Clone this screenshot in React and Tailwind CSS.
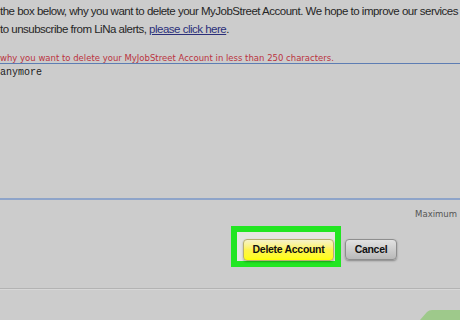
import React from 'react';

const App = () => {
    return (
        <div className="relative w-[460px] h-[320px] overflow-hidden bg-[#cccccc]" style={{ fontFamily: '"Liberation Sans", Arial, sans-serif' }}>
            {/* intro text */}
            <div className="pt-[2px] text-[11.5px] leading-[18px] tracking-[-0.5px] text-[#262626] whitespace-nowrap">
                <p>the box below, why you want to delete your MyJobStreet Account. We hope to improve our services based on your feedback.</p>
                <p>
                    to unsubscribe from LiNa alerts,{' '}
                    <a className="text-[#2b2f7a] underline">please click here</a>.
                </p>
            </div>

            {/* reason label */}
            <p className="mt-[15px] text-[8.5px] leading-[10px] text-[#bb3340] whitespace-nowrap" style={{ fontFamily: '"DejaVu Sans", Verdana, sans-serif' }}>
                why you want to delete your MyJobStreet Account in less than 250 characters.
            </p>

            {/* textarea */}
            <div className="h-[137px] border-t border-[#5d7db3] border-b-2 border-b-[#8ea4c9]">
                <p className="pt-[3px] text-[10px] leading-[12px] text-[#222]" style={{ fontFamily: '"Liberation Mono", "Courier New", monospace' }}>anymore</p>
            </div>

            <div className="flex justify-end pr-[3px] pt-[8px] text-[8.5px] leading-[12px] text-[#555]" style={{ fontFamily: '"DejaVu Sans", Verdana, sans-serif' }}>
                Maximum
            </div>

            {/* buttons */}
            <div className="flex items-start gap-[4px] pl-[231px] mt-[6px]">
                <div className="bg-[#22e622] p-[6px]">
                    <div className="bg-[#e6e6e2] pl-[6px] pt-[7px] pr-[1px]">
                        <button className="block w-[91px] h-[22px] rounded-[4px] border border-[#b8b070] bg-gradient-to-b from-[#f6f2c8] via-[#fff34a] to-[#ffff00] text-[10.5px] tracking-[-0.3px] font-bold text-[#111] shadow-[0_1px_2px_rgba(0,0,0,0.3)]">
                            Delete Account
                        </button>
                    </div>
                </div>
                <button className="w-[52px] h-[21px] mt-[13px] rounded-[4px] border border-[#8e8e8e] bg-gradient-to-b from-[#e2e2e2] to-[#b9b9b9] text-[10.5px] tracking-[-0.3px] font-bold text-[#111] shadow-[0_1px_2px_rgba(0,0,0,0.35)]">
                    Cancel
                </button>
            </div>

            {/* footer rule */}
            <div className="mt-[21px] border-t border-[#b3b3b3] border-b border-b-[#d8d8d8]" />

            {/* watermark corner */}
            <svg className="absolute right-0 bottom-0" width="40" height="10" viewBox="0 0 40 10">
                <path d="M0 10 L7 2 Q9 0 12 0 L40 0 L40 10 Z" fill="#9ec98b" />
            </svg>
        </div>
    );
};

export default App;
